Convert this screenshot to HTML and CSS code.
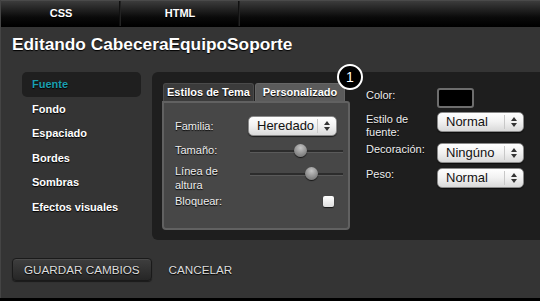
FILE: index.html
```html
<!DOCTYPE html>
<html lang="es">
<head>
<meta charset="utf-8">
<title>Editando CabeceraEquipoSoporte</title>
<link rel="stylesheet" href="styles.css">
</head>
<body>
<div class="app">
    <div class="topbar">
        <div class="toptab">CSS</div>
        <div class="toptab">HTML</div>
        <div class="topfill"></div>
    </div>

    <h1 class="title">Editando CabeceraEquipoSoporte</h1>

    <div class="main">
        <ul class="nav">
            <li class="active">Fuente</li>
            <li>Fondo</li>
            <li>Espaciado</li>
            <li>Bordes</li>
            <li>Sombras</li>
            <li>Efectos visuales</li>
        </ul>

        <div class="panel">
            <div class="tabbox">
                <div class="tabs">
                    <span class="tab">Estilos de Tema</span>
                    <span class="tab on">Personalizado</span>
                </div>
                <div class="tabbody">
                    <div class="lbl r1">Familia:</div>
                    <div class="select wide r1"><span>Heredado</span><i class="arrows"></i></div>

                    <div class="lbl r2">Tamaño:</div>
                    <div class="slider r2"><div class="thumb t-size"></div></div>

                    <div class="lbl r3">Línea de<br>altura</div>
                    <div class="slider r3"><div class="thumb t-line"></div></div>

                    <div class="lbl r4">Bloquear:</div>
                    <div class="check r4"></div>
                </div>
                <span class="badge">1</span>
            </div>

            <div class="props">
                <div class="plbl">Color:</div>
                <div class="swatch"></div>

                <div class="plbl">Estilo de<br>fuente:</div>
                <div class="select"><span>Normal</span><i class="arrows"></i></div>

                <div class="plbl">Decoración:</div>
                <div class="select low"><span>Ningúno</span><i class="arrows"></i></div>

                <div class="plbl">Peso:</div>
                <div class="select low"><span>Normal</span><i class="arrows"></i></div>
            </div>
        </div>
    </div>

    <div class="footer">
        <button class="save">GUARDAR CAMBIOS</button>
        <span class="cancel">CANCELAR</span>
    </div>
</div>
</body>
</html>
```

FILE: styles.css
```css
html, body {
    margin: 0;
    padding: 0;
    background: #000;
}

.app {
    width: 540px;
    height: 298px;
    background: #343434;
    border-left: 1px solid #444;
    box-sizing: border-box;
    font-family: "Liberation Sans", Arial, sans-serif;
    color: #fff;
    overflow: hidden;
}

/* top bar */
.topbar {
    height: 27px;
    display: flex;
    border-top: 1px solid #4a4a4a;
    box-sizing: border-box;
    background: linear-gradient(#3c3c3c, #0a0a0a 65%, #000);
    border-bottom: 1px solid #000;
}

.toptab {
    width: 118px;
    border-right: 1px solid #222;
    box-shadow: inset -1px 0 0 #111;
    font-size: 11px;
    font-weight: bold;
    text-align: center;
    line-height: 25px;
    text-shadow: 0 1px 0 #000;
}

.toptab:first-child {
    margin-left: 1px;
}

.topfill {
    flex: 1;
}

.title {
    margin: 0;
    height: 45px;
    box-sizing: border-box;
    padding: 7px 0 0 11px;
    font-size: 17.3px;
    line-height: 20px;
    font-weight: bold;
    text-shadow: 0 1px 1px #000;
}

/* main area */
.main {
    display: flex;
    height: 168px;
}

.nav {
    list-style: none;
    margin: 0;
    padding: 0 0 0 21px;
    width: 151px;
    box-sizing: border-box;
}

.nav li {
    width: 119px;
    height: 24.5px;
    line-height: 24px;
    padding-left: 10px;
    box-sizing: border-box;
    font-size: 11px;
    font-weight: bold;
    text-shadow: 0 1px 1px #000;
}

.nav li.active {
    background: #1f1f1f;
    border-radius: 5px;
    color: #1b9fb0;
}

.panel {
    flex: 1;
    background: #1e1e1e;
    border-radius: 6px 0 0 6px;
    display: flex;
    padding: 11px 0 0 10px;
    box-sizing: border-box;
    gap: 16px;
}

/* tab box */
.tabbox {
    width: 188px;
    position: relative;
}

.tabs {
    display: flex;
    height: 18px;
    padding-left: 1px;
    gap: 1px;
}

.tab {
    width: 91px;
    height: 18px;
    box-sizing: border-box;
    border-radius: 3px 3px 0 0;
    background: #3b3b3b;
    border: 1px solid #4a4a4a;
    border-bottom: none;
    font-size: 11px;
    font-weight: bold;
    line-height: 17px;
    text-align: center;
    text-shadow: 0 1px 1px #000;
}

.tab.on {
    width: 90px;
    background: #5b5b5b;
    border-color: #666;
}

.tabbody {
    height: 129px;
    box-sizing: border-box;
    background: #474747;
    border: 2px solid #616161;
    border-radius: 0 3px 4px 4px;
    padding: 12px 8px 0 11px;
    display: grid;
    grid-template-columns: 73px 89px;
    grid-template-rows: 22px 25px 30px 18px;
    align-items: center;
}

.lbl {
    font-size: 11px;
    line-height: 14px;
    color: #eee;
    text-shadow: 0 1px 1px #000;
}

.lbl.r3 {
    align-self: start;
    padding-top: 2px;
}

.select {
    height: 20px;
    box-sizing: border-box;
    border-radius: 5px;
    background: linear-gradient(#fff, #f1f1f1 50%, #d9d9d9);
    border: 1px solid #8a8a8a;
    box-shadow: 0 1px 1px rgba(0,0,0,0.6);
    display: flex;
    align-items: center;
    color: #111;
    font-size: 13px;
}

.select.low {
    margin-top: 1px;
}

.select span {
    flex: 1;
    padding-left: 8px;
    line-height: 18px;
}

.select .arrows {
    width: 18px;
    height: 14px;
    border-left: 1px solid #c8c8c8;
    position: relative;
}

.select .arrows::before,
.select .arrows::after {
    content: "";
    position: absolute;
    left: 6px;
    border-left: 3px solid transparent;
    border-right: 3px solid transparent;
}

.select .arrows::before {
    top: 2px;
    border-bottom: 4px solid #333;
}

.select .arrows::after {
    top: 8px;
    border-top: 4px solid #333;
}

.select.wide {
    width: 89px;
}

.slider {
    height: 2px;
    margin-left: 2px;
    width: 93px;
    background: #2c2c2c;
    border-bottom: 1px solid #5a5a5a;
    position: relative;
}

.slider.r2 {
    margin-top: 3px;
}

.slider.r3 {
    align-self: start;
    margin-top: 11px;
}

.thumb {
    position: absolute;
    top: -6px;
    width: 13px;
    height: 13px;
    border-radius: 50%;
    background: radial-gradient(circle at 50% 30%, #c4c4c4, #8a8a8a 60%, #6a6a6a);
    box-shadow: 0 1px 1px rgba(0,0,0,0.7);
}

.t-size { left: 44px; }
.t-line { left: 55px; }

.check {
    justify-self: end;
    width: 11px;
    height: 11px;
    margin-right: 3px;
    border-radius: 2px;
    background: linear-gradient(#fff, #ddd);
    box-shadow: 0 1px 1px rgba(0,0,0,0.7);
}

.badge {
    position: absolute;
    left: 175px;
    top: -19px;
    width: 22px;
    height: 22px;
    border-radius: 50%;
    background: #000;
    border: 2px solid #fff;
    color: #fff;
    font-size: 14px;
    line-height: 22px;
    text-align: center;
}

/* right properties */
.props {
    display: grid;
    grid-template-columns: 71px 87px;
    grid-template-rows: 20px 26px 21px 21px;
    row-gap: 4px;
    margin-top: 5px;
    align-content: start;
}

.plbl {
    font-size: 11px;
    line-height: 13px;
    padding-top: 1px;
    color: #eee;
    text-shadow: 0 1px 1px #000;
}

.swatch {
    width: 37px;
    height: 20px;
    box-sizing: border-box;
    border-radius: 3px;
    background: #000;
    border: 2px solid #6d6d6d;
}

/* footer */
.footer {
    height: 58px;
    display: flex;
    align-items: center;
    padding-left: 11px;
    gap: 17px;
}

.save {
    height: 23px;
    margin-top: 1px;
    padding: 0 11px;
    border-radius: 4px;
    border: 1px solid #1a1a1a;
    background: linear-gradient(#3e3e3e, #262626);
    box-shadow: inset 0 1px 0 #4a4a4a, 0 1px 1px rgba(0,0,0,0.5);
    color: #ddd;
    font-family: "Liberation Sans", Arial, sans-serif;
    font-size: 11.7px;
    text-shadow: 0 1px 1px #000;
}

.cancel {
    color: #ddd;
    font-size: 11.7px;
    text-shadow: 0 1px 1px #000;
}
```
